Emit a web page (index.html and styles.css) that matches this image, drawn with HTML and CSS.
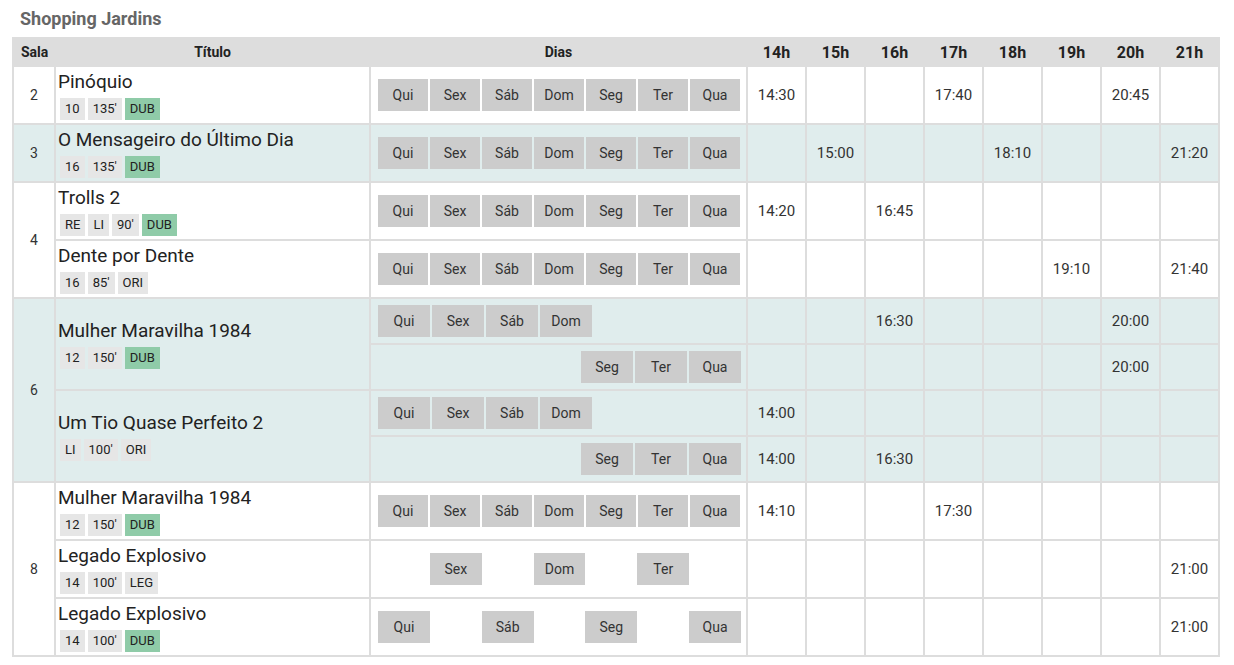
FILE: index.html
```html
<!DOCTYPE html>
<html lang="pt-BR">
<head>
    <meta charset="UTF-8">
    <meta name="viewport" content="width=device-width, initial-scale=1.0">
    <title>Shopping Jardins</title>
    <link rel="stylesheet" href="styles.css">
</head>
<body>
    <div class="page">
        <h2 class="cinema-name">Shopping Jardins</h2>
        <table class="schedule">
            <colgroup>
                <col class="c-sala">
                <col class="c-title">
                <col class="c-days">
                <col class="c-hour"><col class="c-hour"><col class="c-hour"><col class="c-hour">
                <col class="c-hour"><col class="c-hour"><col class="c-hour"><col class="c-hour">
            </colgroup>
            <thead>
                <tr>
                    <th class="sala-head">Sala</th>
                    <th>Título</th>
                    <th>Dias</th>
                    <th class="hour">14h</th>
                    <th class="hour">15h</th>
                    <th class="hour">16h</th>
                    <th class="hour">17h</th>
                    <th class="hour">18h</th>
                    <th class="hour">19h</th>
                    <th class="hour">20h</th>
                    <th class="hour">21h</th>
                </tr>
            </thead>
            <tbody>
                <!-- sala 2 -->
                <tr class="row">
                    <td class="sala">2</td>
                    <td class="title">
                        <div class="film">Pinóquio</div>
                        <div class="tags"><span class="tag">10</span><span class="tag">135'</span><span class="tag dub">DUB</span></div>
                    </td>
                    <td class="days">
                        <div class="day-list"><span class="day">Qui</span><span class="day">Sex</span><span class="day">Sáb</span><span class="day">Dom</span><span class="day">Seg</span><span class="day">Ter</span><span class="day">Qua</span></div>
                    </td>
                    <td class="time">14:30</td><td class="time"></td><td class="time"></td><td class="time">17:40</td>
                    <td class="time"></td><td class="time"></td><td class="time">20:45</td><td class="time"></td>
                </tr>

                <!-- sala 3 -->
                <tr class="row alt">
                    <td class="sala">3</td>
                    <td class="title">
                        <div class="film">O Mensageiro do Último Dia</div>
                        <div class="tags"><span class="tag">16</span><span class="tag">135'</span><span class="tag dub">DUB</span></div>
                    </td>
                    <td class="days">
                        <div class="day-list"><span class="day">Qui</span><span class="day">Sex</span><span class="day">Sáb</span><span class="day">Dom</span><span class="day">Seg</span><span class="day">Ter</span><span class="day">Qua</span></div>
                    </td>
                    <td class="time"></td><td class="time">15:00</td><td class="time"></td><td class="time"></td>
                    <td class="time">18:10</td><td class="time"></td><td class="time"></td><td class="time">21:20</td>
                </tr>

                <!-- sala 4 -->
                <tr class="row">
                    <td class="sala" rowspan="2">4</td>
                    <td class="title">
                        <div class="film">Trolls 2</div>
                        <div class="tags"><span class="tag">RE</span><span class="tag">LI</span><span class="tag">90'</span><span class="tag dub">DUB</span></div>
                    </td>
                    <td class="days">
                        <div class="day-list"><span class="day">Qui</span><span class="day">Sex</span><span class="day">Sáb</span><span class="day">Dom</span><span class="day">Seg</span><span class="day">Ter</span><span class="day">Qua</span></div>
                    </td>
                    <td class="time">14:20</td><td class="time"></td><td class="time">16:45</td><td class="time"></td>
                    <td class="time"></td><td class="time"></td><td class="time"></td><td class="time"></td>
                </tr>
                <tr class="row">
                    <td class="title">
                        <div class="film">Dente por Dente</div>
                        <div class="tags"><span class="tag">16</span><span class="tag">85'</span><span class="tag">ORI</span></div>
                    </td>
                    <td class="days">
                        <div class="day-list"><span class="day">Qui</span><span class="day">Sex</span><span class="day">Sáb</span><span class="day">Dom</span><span class="day">Seg</span><span class="day">Ter</span><span class="day">Qua</span></div>
                    </td>
                    <td class="time"></td><td class="time"></td><td class="time"></td><td class="time"></td>
                    <td class="time"></td><td class="time">19:10</td><td class="time"></td><td class="time">21:40</td>
                </tr>

                <!-- sala 6 -->
                <tr class="sub alt">
                    <td class="sala" rowspan="4">6</td>
                    <td class="title" rowspan="2">
                        <div class="film">Mulher Maravilha 1984</div>
                        <div class="tags"><span class="tag">12</span><span class="tag">150'</span><span class="tag dub">DUB</span></div>
                    </td>
                    <td class="days">
                        <div class="day-list wide"><span class="day">Qui</span><span class="day">Sex</span><span class="day">Sáb</span><span class="day">Dom</span></div>
                    </td>
                    <td class="time"></td><td class="time"></td><td class="time">16:30</td><td class="time"></td>
                    <td class="time"></td><td class="time"></td><td class="time">20:00</td><td class="time"></td>
                </tr>
                <tr class="sub alt">
                    <td class="days">
                        <div class="day-list wide end"><span class="day">Seg</span><span class="day">Ter</span><span class="day">Qua</span></div>
                    </td>
                    <td class="time"></td><td class="time"></td><td class="time"></td><td class="time"></td>
                    <td class="time"></td><td class="time"></td><td class="time">20:00</td><td class="time"></td>
                </tr>
                <tr class="sub alt">
                    <td class="title" rowspan="2">
                        <div class="film">Um Tio Quase Perfeito 2</div>
                        <div class="tags"><span class="tag">LI</span><span class="tag">100'</span><span class="tag">ORI</span></div>
                    </td>
                    <td class="days">
                        <div class="day-list wide"><span class="day">Qui</span><span class="day">Sex</span><span class="day">Sáb</span><span class="day">Dom</span></div>
                    </td>
                    <td class="time">14:00</td><td class="time"></td><td class="time"></td><td class="time"></td>
                    <td class="time"></td><td class="time"></td><td class="time"></td><td class="time"></td>
                </tr>
                <tr class="sub alt">
                    <td class="days">
                        <div class="day-list wide end"><span class="day">Seg</span><span class="day">Ter</span><span class="day">Qua</span></div>
                    </td>
                    <td class="time">14:00</td><td class="time"></td><td class="time">16:30</td><td class="time"></td>
                    <td class="time"></td><td class="time"></td><td class="time"></td><td class="time"></td>
                </tr>

                <!-- sala 8 -->
                <tr class="row">
                    <td class="sala" rowspan="3">8</td>
                    <td class="title">
                        <div class="film">Mulher Maravilha 1984</div>
                        <div class="tags"><span class="tag">12</span><span class="tag">150'</span><span class="tag dub">DUB</span></div>
                    </td>
                    <td class="days">
                        <div class="day-list"><span class="day">Qui</span><span class="day">Sex</span><span class="day">Sáb</span><span class="day">Dom</span><span class="day">Seg</span><span class="day">Ter</span><span class="day">Qua</span></div>
                    </td>
                    <td class="time">14:10</td><td class="time"></td><td class="time"></td><td class="time">17:30</td>
                    <td class="time"></td><td class="time"></td><td class="time"></td><td class="time"></td>
                </tr>
                <tr class="row">
                    <td class="title">
                        <div class="film">Legado Explosivo</div>
                        <div class="tags"><span class="tag">14</span><span class="tag">100'</span><span class="tag">LEG</span></div>
                    </td>
                    <td class="days">
                        <div class="day-list slots"><span class="day d2">Sex</span><span class="day d4">Dom</span><span class="day d6">Ter</span></div>
                    </td>
                    <td class="time"></td><td class="time"></td><td class="time"></td><td class="time"></td>
                    <td class="time"></td><td class="time"></td><td class="time"></td><td class="time">21:00</td>
                </tr>
                <tr class="row">
                    <td class="title">
                        <div class="film">Legado Explosivo</div>
                        <div class="tags"><span class="tag">14</span><span class="tag">100'</span><span class="tag dub">DUB</span></div>
                    </td>
                    <td class="days">
                        <div class="day-list slots"><span class="day d1">Qui</span><span class="day d3">Sáb</span><span class="day d5">Seg</span><span class="day d7">Qua</span></div>
                    </td>
                    <td class="time"></td><td class="time"></td><td class="time"></td><td class="time"></td>
                    <td class="time"></td><td class="time"></td><td class="time"></td><td class="time">21:00</td>
                </tr>
            </tbody>
        </table>
    </div>
</body>
</html>
```

FILE: styles.css
```css
body {
    margin: 0;
    font-family: Roboto, "Liberation Sans", sans-serif;
    color: #333;
}

.page {
    padding: 8px 14px 0 12px;
}

.cinema-name {
    margin: 0 0 8px 8px;
    font-size: 18px;
    line-height: 21px;
    font-weight: 700;
    color: #666;
}

.schedule {
    border-collapse: collapse;
    table-layout: fixed;
    width: 1206px;
    border: 2px solid #ddd;
}

.c-sala { width: 42px; }
.c-title { width: 315px; }
.c-days { width: 377px; }
.c-hour { width: 59px; }

.schedule th,
.schedule td {
    border: 2px solid #ddd;
    padding: 0;
}

.schedule th {
    height: 26px;
    background-color: #ddd;
    font-size: 14px;
    color: #222;
}

.schedule th.sala-head {
    text-align: left;
    padding-left: 7px;
}

.schedule th.hour {
    font-size: 16px;
}

.row td {
    height: 56px;
}

.sub td {
    height: 44px;
}

.alt td {
    background-color: #e0eded;
}

td.sala {
    text-align: center;
    font-size: 14px;
}

td.title {
    padding-left: 2px;
}

.film {
    font-size: 19px;
    line-height: 22px;
    color: #222;
    margin-bottom: 5px;
    white-space: nowrap;
}

.tags {
    display: flex;
    gap: 3px;
    margin-left: 2px;
}

.tag {
    display: inline-block;
    height: 22px;
    line-height: 22px;
    padding: 0 5px;
    background-color: #e6e6e6;
    font-size: 13px;
    color: #222;
}

.tag.dub {
    background-color: #8fcba8;
}

td.days {
    padding: 0 5px 0 7px;
}

.day-list {
    display: flex;
    gap: 2px;
}

.day {
    width: 50px;
    height: 32px;
    line-height: 32px;
    text-align: center;
    background-color: #ccc;
    font-size: 14px;
    color: #333;
}

.day-list.wide .day {
    width: 52px;
}

.day-list.end {
    justify-content: flex-end;
}

/* dias avulsos ficam na coluna do seu dia */
.day-list.slots {
    display: grid;
    grid-template-columns: repeat(7, 1fr);
    gap: 0;
}

.day-list.slots .day {
    width: auto;
}

.d1 { grid-column: 1; }
.d2 { grid-column: 2; }
.d3 { grid-column: 3; }
.d4 { grid-column: 4; }
.d5 { grid-column: 5; }
.d6 { grid-column: 6; }
.d7 { grid-column: 7; }

td.time {
    text-align: center;
    font-size: 15px;
}
```
